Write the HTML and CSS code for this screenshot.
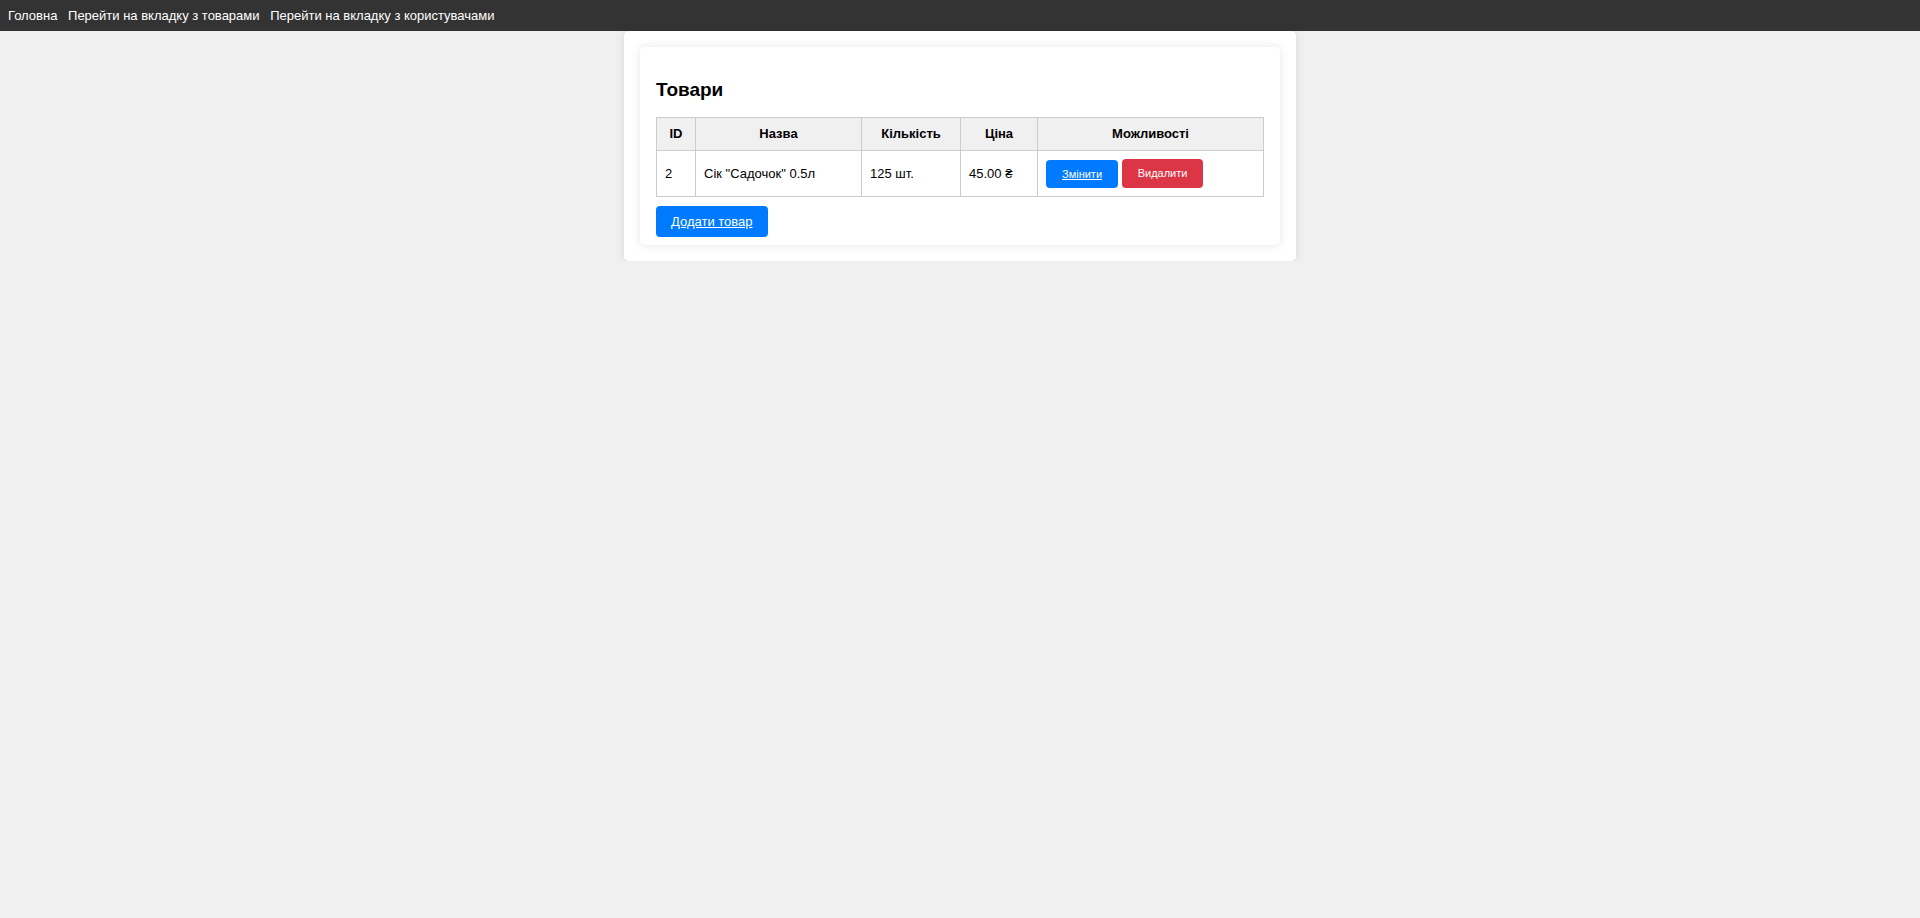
FILE: index.html
```html
<!DOCTYPE html>
<html lang="uk">
<head>
<meta charset="utf-8">
<title>Товари</title>
<link rel="stylesheet" href="styles.css">
</head>
<body>
<nav class="navbar">
  <a href="#">Головна</a>
  <a href="#">Перейти на вкладку з товарами</a>
  <a href="#">Перейти на вкладку з користувачами</a>
</nav>
<main class="container">
  <section class="card">
    <h2 class="title">Товари</h2>
    <table class="table">
      <colgroup>
        <col class="c-id">
        <col class="c-name">
        <col class="c-qty">
        <col class="c-price">
        <col class="c-actions">
      </colgroup>
      <thead>
        <tr>
          <th>ID</th>
          <th>Назва</th>
          <th>Кількість</th>
          <th>Ціна</th>
          <th>Можливості</th>
        </tr>
      </thead>
      <tbody>
        <tr>
          <td>2</td>
          <td>Сік "Садочок" 0.5л</td>
          <td>125 шт.</td>
          <td>45.00 ₴</td>
          <td><a href="#" class="btn btn-edit">Змінити</a> <button class="btn btn-delete" type="button">Видалити</button></td>
        </tr>
      </tbody>
    </table>
    <div class="actions">
      <a href="#" class="btn-add">Додати товар</a>
    </div>
  </section>
</main>
</body>
</html>
```

FILE: styles.css
```css
html, body {
  margin: 0;
  padding: 0;
}

body {
  background: #f0f0f0;
  font-family: "Liberation Sans", Arial, sans-serif;
  font-size: 14px;
  color: #000;
}

.navbar {
  background: #333;
  padding: 8px;
  font-size: 13px;
  line-height: 15px;
}

.navbar a {
  color: #fff;
  text-decoration: none;
  margin-right: 7px;
}

.container {
  width: 640px;
  margin: 0 auto;
  padding: 16px;
  background: #fff;
  border-radius: 5px;
  box-shadow: 0 0 10px rgba(0, 0, 0, 0.1);
}

.card {
  background: #fff;
  padding: 16px;
  border-radius: 5px;
  box-shadow: 0 0 10px rgba(0, 0, 0, 0.1);
}

.title {
  font-size: 19px;
  line-height: 22px;
  margin: 16px 0 16px;
}

.table {
  width: 100%;
  border-collapse: collapse;
  table-layout: fixed;
  font-size: 13px;
}

.c-id { width: 39px; }
.c-name { width: 166px; }
.c-qty { width: 99px; }
.c-price { width: 77px; }

.table th,
.table td {
  border: 1px solid #ccc;
  padding: 8px;
  line-height: 16px;
}

.table th {
  background: #f0f0f0;
  text-align: center;
  font-weight: bold;
}

.table td {
  text-align: left;
}

.btn {
  display: inline-block;
  font-family: "Liberation Sans", Arial, sans-serif;
  font-size: 11px;
  line-height: 14px;
  padding: 7px 16px;
  margin: 0;
  border: none;
  border-radius: 4px;
  color: #fff;
  vertical-align: middle;
}

.btn-edit {
  background: #007bff;
  text-decoration: underline;
}

.btn-delete {
  background: #dc3545;
  padding: 7px 16px 8px;
  cursor: pointer;
}

.actions {
  margin-top: 16px;
}

.btn-add {
  background: #007bff;
  color: #fff;
  font-size: 13px;
  padding: 8px 15px;
  border-radius: 4px;
  text-decoration: underline;
}
```
